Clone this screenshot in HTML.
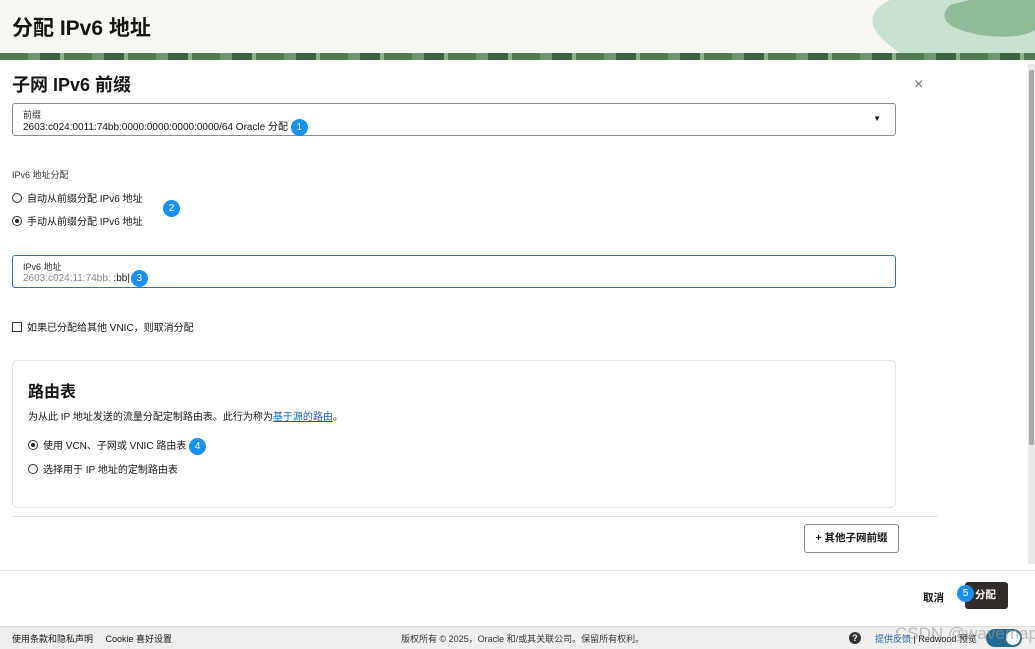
<!DOCTYPE html>
<html><head><meta charset="utf-8"><style>
*{margin:0;padding:0;box-sizing:border-box}
body{width:1035px;height:649px;overflow:hidden;background:#fff;font-family:"Liberation Sans","Noto Sans CJK SC",sans-serif;color:#161513;position:relative}
.abs{position:absolute;white-space:nowrap}
.hdr{left:0;top:0;width:1035px;height:53px;background:#f7f6f3;overflow:hidden}
.band{left:0;top:53px;width:1035px;height:7px;background:repeating-linear-gradient(90deg,#4d7a55 0 28px,#6e9a70 28px 40px,#3b6444 40px 60px,#8ab48a 60px 64px);}
.t1{left:12px;top:12px;font-size:21px;font-weight:bold}
.t2{left:12px;top:71px;font-size:18px;font-weight:bold}
.box{border:1px solid #8f8c88;border-radius:3px}
.lbl{font-size:9px;color:#333}
.txt{font-size:10px}
.badge{display:inline-block;width:17px;height:17px;border-radius:50%;background:#1a90f0;color:#fff;font-size:10px;text-align:center;line-height:17px;vertical-align:middle}
.radio{display:inline-block;width:10px;height:10px;border:1px solid #333;border-radius:50%;vertical-align:-1px;margin-right:5px;position:relative}
.radio.on::after{content:"";position:absolute;left:2px;top:2px;width:4px;height:4px;border-radius:50%;background:#222}
</style></head><body>
<div class="abs hdr">
 <svg class="abs" style="left:830px;top:0" width="205" height="53"><path d="M60 0 Q20 20 70 53 L205 53 L205 0Z" fill="#c9e2cf"/><path d="M120 5 Q100 25 150 35 Q190 40 205 30 L205 0 L140 0Z" fill="#8fbb98"/></svg>
</div>
<div class="abs band"></div>
<div class="abs t1">分配 IPv6 地址</div>
<div class="abs" style="left:1028px;top:64px;width:7px;height:500px;background:#e8e8e8"></div>
<div class="abs" style="left:1029px;top:70px;width:5px;height:375px;background:#a9a9a9;border-radius:2px"></div>
<div class="abs t2">子网 IPv6 前缀</div>
<div class="abs" style="left:914px;top:76px;font-size:16px;color:#777">×</div>
<div class="abs box" style="left:12px;top:103px;width:884px;height:33px">
 <div class="abs lbl" style="left:10px;top:4px">前缀</div>
 <div class="abs txt" style="left:10px;top:14px">2603:c024:0011:74bb:0000:0000:0000:0000/64 Oracle 分配 <span class="badge">1</span></div>
 <div class="abs" style="right:14px;top:10px;font-size:8px">▼</div>
</div>
<div class="abs lbl" style="left:12px;top:168px">IPv6 地址分配</div>
<div class="abs txt" style="left:12px;top:190px"><span class="radio"></span>自动从前缀分配 IPv6 地址</div>
<div class="abs txt" style="left:12px;top:213px"><span class="radio on"></span>手动从前缀分配 IPv6 地址</div>
<div class="abs badge" style="left:163px;top:200px">2</div>
<div class="abs box" style="left:12px;top:255px;width:884px;height:33px;border-color:#3b6ea5">
 <div class="abs lbl" style="left:10px;top:4px">IPv6 地址</div>
 <div class="abs txt" style="left:10px;top:14px"><span style="color:#888">2603:c024:11:74bb: </span>:bb| <span class="badge" style="margin-left:-2px">3</span></div>
</div>
<div class="abs txt" style="left:12px;top:319px"><span style="display:inline-block;width:10px;height:10px;border:1px solid #333;vertical-align:-1px;margin-right:5px"></span>如果已分配给其他 VNIC，则取消分配</div>
<div class="abs" style="left:12px;top:360px;width:884px;height:148px;border:1px solid #e8e6e3;border-radius:6px">
 <div class="abs" style="left:15px;top:17px;font-size:16px;font-weight:bold">路由表</div>
 <div class="abs txt" style="left:15px;top:47px">为从此 IP 地址发送的流量分配定制路由表。此行为称为<span style="color:#1a5fa8;text-decoration:underline">基于源的路由</span>。</div>
 <div class="abs txt" style="left:15px;top:76px"><span class="radio on"></span>使用 VCN、子网或 VNIC 路由表 <span class="badge">4</span></div>
 <div class="abs txt" style="left:15px;top:100px"><span class="radio"></span>选择用于 IP 地址的定制路由表</div>
</div>
<div class="abs" style="left:12px;top:516px;width:926px;height:1px;background:#e6e4e1"></div>
<div class="abs" style="left:804px;top:524px;width:95px;height:29px;border:1px solid #8f8c88;border-radius:3px;font-size:10.5px;font-weight:bold;text-align:center;line-height:27px">+ 其他子网前缀</div>
<div class="abs" style="left:0;top:570px;width:1035px;height:1px;background:#e6e4e1"></div>
<div class="abs" style="left:923px;top:590px;font-size:10.5px;font-weight:bold">取消</div>
<div class="abs" style="left:965px;top:582px;width:43px;height:27px;background:#312d2a;border-radius:3px;color:#fff;font-size:10.5px;font-weight:bold;line-height:27px;padding-left:10px">分配</div>
<div class="abs badge" style="left:957px;top:585px">5</div>
<div class="abs" style="left:0;top:626px;width:1035px;height:23px;background:#f1efed;border-top:1px solid #e0ddd9"></div>
<div class="abs" style="left:12px;top:632px;font-size:9px">使用条款和隐私声明 &nbsp;&nbsp;&nbsp;&nbsp;Cookie 喜好设置</div>
<div class="abs" style="left:401px;top:632px;font-size:9px;color:#333">版权所有 © 2025，Oracle 和/或其关联公司。保留所有权利。</div>
<div class="abs" style="left:849px;top:632px;width:12px;height:12px;border-radius:50%;background:#333;color:#fff;font-size:9px;text-align:center;line-height:12px;font-weight:bold">?</div>
<div class="abs" style="left:875px;top:632px;font-size:9px"><span style="color:#1a5fa8">提供反馈</span> | Redwood 预览</div>
<div class="abs" style="left:986px;top:629px;width:36px;height:18px;background:#236a93;border-radius:9px"><div style="position:absolute;right:2px;top:2px;width:14px;height:14px;border-radius:50%;background:#fff"></div></div>
<div class="abs" style="left:895px;top:624px;font-size:17px;color:rgba(150,150,150,.6)">CSDN @wavemap</div>
</body></html>
